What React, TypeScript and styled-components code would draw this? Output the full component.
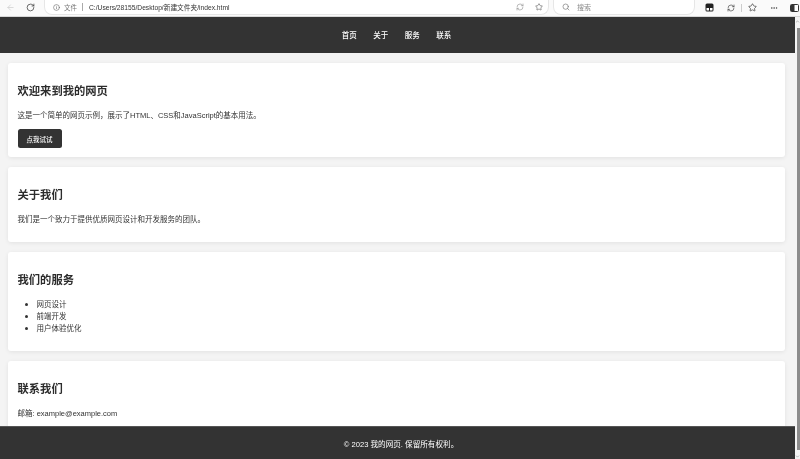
import React from "react";
import styled, { createGlobalStyle } from "styled-components";
import { ArrowLeft, RotateCw, Info, Star, RefreshCw, Search, MoreHorizontal, ChevronUp, ChevronDown } from "lucide-react";

const Global = createGlobalStyle`
  html, body { margin: 0; padding: 0; height: 100%; overflow: hidden; background: #f4f4f4; }
  body { font-family: "Liberation Sans", "Noto Sans CJK SC", sans-serif; }
  * { box-sizing: border-box; }
`;

const Frame = styled.div`
  width: 800px; height: 459px; display: flex; flex-direction: column; overflow: hidden;
  will-change: transform;
`;

const Toolbar = styled.div`
  height: 17px; flex: none; background: #fafafa; border-bottom: 1px solid #d8d8d8;
  display: flex; align-items: flex-start; color: #444; padding-left: 6px;
`;
const NavIcon = styled.span<{ $w: number; $dim?: boolean }>`
  width: ${p => p.$w}px; height: 15px; flex: none; display: flex; align-items: center;
  color: ${p => (p.$dim ? "#cfcfcf" : "#3c3c3c")};
`;
const Pill = styled.div<{ $w: number; $mr?: number }>`
  width: ${p => p.$w}px; height: 15px; flex: none; background: #fff; border: 1px solid #e6e6e6;
  border-top: none; border-radius: 0 0 8px 8px; margin-right: ${p => p.$mr ?? 0}px;
  display: flex; align-items: center; padding: 0 5px 0 8px; font-size: 6.5px; color: #555;
`;
const Scheme = styled.span`
  margin-left: 4px; color: #777; font-size: 6.5px;
`;
const Sep = styled.span`
  width: 1px; height: 8px; background: #aaa; margin: 0 6px 0 5px; flex: none;
`;
const Url = styled.span`
  color: #333; font-size: 6.7px; flex: 1; white-space: nowrap;
`;
const UrlAction = styled.span`
  display: flex; align-items: center; margin-right: 11px; color: #999;
`;
const SearchText = styled.span`
  color: #8a8a8a; font-size: 7px; margin-left: 7px;
`;
const Tail = styled.div`
  display: flex; align-items: center; height: 15px; color: #444;
`;
const TailSlot = styled.span<{ $w: number }>`
  width: ${p => p.$w}px; display: flex; align-items: center; flex: none;
`;
const TailSep = styled.span`
  width: 1px; height: 8px; background: #ccc; margin-right: 6px; flex: none;
`;

const Body = styled.div`
  flex: 1; display: flex; min-height: 0;
`;
const Viewport = styled.div`
  flex: 1; display: flex; flex-direction: column; min-width: 0;
`;
const Header = styled.header`
  height: 36px; flex: none; background: #333; padding: 0 2px 2px 0;
  display: flex; justify-content: center; align-items: center; gap: 16.5px; color: #fff; font-size: 7.5px;
`;
const NavLink = styled.a`
  color: #fff; font-weight: 500;
`;
const Main = styled.main`
  flex: 1; min-height: 0; overflow: hidden; padding: 10px 10px 0 8px;
  display: flex; flex-direction: column; gap: 10px;
`;
const Card = styled.section<{ $pb?: number }>`
  flex: none; background: #fff; border-radius: 3px; padding: 20.5px 9.5px ${p => p.$pb ?? 16}px;
  box-shadow: 0 1px 4px rgba(0,0,0,.08); color: #333; font-size: 7.5px; line-height: 12px;
`;
const Title = styled.h2`
  margin: 0 0 12.5px; font-size: 11.3px; line-height: 14px; font-weight: 700; color: #2c2c2c;
`;
const Text = styled.p<{ $mb?: number }>`
  margin: 0 0 ${p => p.$mb ?? 0}px;
`;
const Action = styled.button`
  display: block; width: 44px; height: 19px; padding: 0; background: #333; color: #fff; border: none;
  border-radius: 2.5px; font: 500 6.5px "Liberation Sans", "Noto Sans CJK SC", sans-serif;
`;
const List = styled.ul`
  margin: -1px 0 0; padding-left: 19px;
`;
const Item = styled.li`
  height: 12px;
  &::marker { font-size: 9px; }
`;
const Footer = styled.footer`
  height: 33px; flex: none; background: #333; border-top: 1px solid #555; color: #fff; padding-left: 7px;
  display: flex; align-items: center; justify-content: center; font-size: 7.6px;
`;

const Scrollbar = styled.div`
  width: 5px; flex: none; background: #f4f4f4; display: flex; flex-direction: column; align-items: flex-end;
  color: #666; padding-top: 2px;
`;
const Thumb = styled.div`
  flex: 1; width: 3px; background: #8c8c8c; margin: 4px 0 4px;
`;

export default function App() {
  return (
    <Frame>
      <Global />
      <Toolbar>
        <NavIcon $w={20} $dim><ArrowLeft size={9} /></NavIcon>
        <NavIcon $w={18}><RotateCw size={9} /></NavIcon>
        <Pill $w={505} $mr={4}>
          <Info size={7} color="#666" />
          <Scheme>文件</Scheme>
          <Sep />
          <Url>C:/Users/28155/Desktop/新建文件夹/index.html</Url>
          <UrlAction><RefreshCw size={8} /></UrlAction>
          <Star size={8} color="#666" />
        </Pill>
        <Pill $w={142} $mr={10}>
          <Search size={8} color="#777" />
          <SearchText>搜索</SearchText>
        </Pill>
        <Tail>
          <TailSlot $w={22}><svg width="9" height="9" viewBox="0 0 9 9"><rect x="0.5" y="0.5" width="8" height="8" rx="1.5" fill="#222" /><rect x="1.5" y="5" width="2.5" height="2.5" fill="#fff" /><rect x="5" y="5" width="2.5" height="2.5" fill="#fff" /></svg></TailSlot>
          <TailSlot $w={14}><RefreshCw size={8} /></TailSlot>
          <TailSep />
          <TailSlot $w={22}><Star size={9} /></TailSlot>
          <TailSlot $w={20}><MoreHorizontal size={8} /></TailSlot>
          <TailSlot $w={9}><svg width="9" height="8" viewBox="0 0 9 8"><rect x="0.5" y="0.5" width="8" height="7" rx="1" fill="#fff" stroke="#333" /><rect x="1" y="1" width="3.5" height="6" fill="#333" /></svg></TailSlot>
        </Tail>
      </Toolbar>
      <Body>
        <Viewport>
          <Header>
            <NavLink>首页</NavLink>
            <NavLink>关于</NavLink>
            <NavLink>服务</NavLink>
            <NavLink>联系</NavLink>
          </Header>
          <Main>
            <Card $pb={9}>
              <Title>欢迎来到我的网页</Title>
              <Text $mb={7}>这是一个简单的网页示例，展示了HTML、CSS和JavaScript的基本用法。</Text>
              <Action>点我试试</Action>
            </Card>
            <Card>
              <Title>关于我们</Title>
              <Text>我们是一个致力于提供优质网页设计和开发服务的团队。</Text>
            </Card>
            <Card $pb={17}>
              <Title>我们的服务</Title>
              <List>
                <Item>网页设计</Item>
                <Item>前端开发</Item>
                <Item>用户体验优化</Item>
              </List>
            </Card>
            <Card>
              <Title>联系我们</Title>
              <Text>邮箱: example@example.com</Text>
            </Card>
          </Main>
          <Footer>© 2023 我的网页. 保留所有权利。</Footer>
        </Viewport>
        <Scrollbar>
          <ChevronUp size={5} />
          <Thumb />
          <ChevronDown size={5} />
        </Scrollbar>
      </Body>
    </Frame>
  );
}
